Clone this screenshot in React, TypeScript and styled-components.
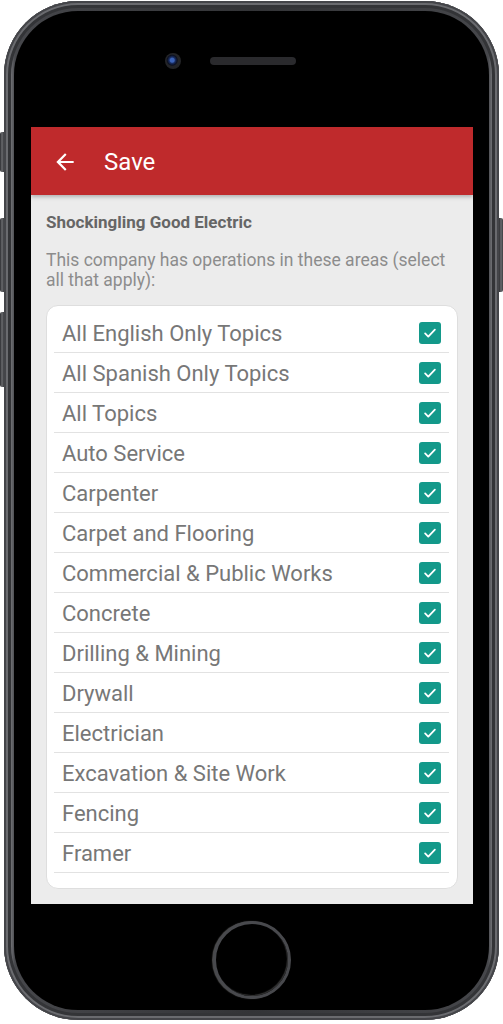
import React, { useState } from 'react';
import styled, { createGlobalStyle } from 'styled-components';

const GlobalStyle = createGlobalStyle`
  html, body {
    margin: 0;
    padding: 0;
    background: #ffffff;
  }
  body {
    font-family: Roboto, 'Noto Sans', Arial, sans-serif;
  }
`;

const TOPICS = [
  'All English Only Topics',
  'All Spanish Only Topics',
  'All Topics',
  'Auto Service',
  'Carpenter',
  'Carpet and Flooring',
  'Commercial & Public Works',
  'Concrete',
  'Drilling & Mining',
  'Drywall',
  'Electrician',
  'Excavation & Site Work',
  'Fencing',
  'Framer',
];

const App: React.FC = () => {
  const [checked, setChecked] = useState<Record<string, boolean>>(
    Object.fromEntries(TOPICS.map((t) => [t, true]))
  );

  const toggle = (topic: string) => {
    setChecked((prev) => ({ ...prev, [topic]: !prev[topic] }));
  };

  return (
    <>
      <GlobalStyle />
      <Stage>
        <Phone>
          <SideButton $side="left" $top={131} $height={40} />
          <SideButton $side="left" $top={217} $height={74} />
          <SideButton $side="left" $top={311} $height={75} />
          <SideButton $side="right" $top={217} $height={74} />
          <Face>
            <TopBar>
              <Camera />
              <Speaker />
            </TopBar>
            <Screen>
              <AppBar>
                <BackIcon viewBox="0 0 24 24">
                  <path d="M20 11H7.83l5.59-5.59L12 4l-8 8 8 8 1.41-1.41L7.83 13H20v-2z" />
                </BackIcon>
                <AppTitle>Save</AppTitle>
              </AppBar>
              <Content>
                <CompanyName>Shockingling Good Electric</CompanyName>
                <Description>
                  This company has operations in these areas (select all that apply):
                </Description>
                <Card>
                  {TOPICS.map((topic) => (
                    <Row key={topic} onClick={() => toggle(topic)}>
                      <RowLabel>{topic}</RowLabel>
                      <CheckBox $on={checked[topic]}>
                        {checked[topic] && (
                          <svg viewBox="0 0 24 24" width="18" height="18">
                            <path
                              d="M5.5 12.5l4.2 4.2L18.5 7.5"
                              fill="none"
                              stroke="#fff"
                              strokeWidth="2.4"
                              strokeLinecap="round"
                              strokeLinejoin="round"
                            />
                          </svg>
                        )}
                      </CheckBox>
                    </Row>
                  ))}
                </Card>
              </Content>
            </Screen>
            <BottomBar>
              <HomeButton />
            </BottomBar>
          </Face>
        </Phone>
      </Stage>
    </>
  );
};

export default App;

const Stage = styled.div`
  width: 503px;
  height: 1024px;
  padding: 1px 4px 0 4px;
  box-sizing: border-box;
`;

const Phone = styled.div`
  position: relative;
  width: 495px;
  height: 1019px;
  box-sizing: border-box;
  border-radius: 74px;
  padding: 10px;
  background: linear-gradient(90deg, #38393c 0%, #707175 1.4%, #46474b 2.2%, #333437 50%, #46474b 97.8%, #707175 98.6%, #38393c 100%);
  box-shadow: inset 0 0 0 2px #444549, inset 0 0 0 4px #6a6b6f, inset 0 0 0 7px #333437;
`;

const SideButton = styled.div<{ $side: 'left' | 'right'; $top: number; $height: number }>`
  position: absolute;
  top: ${(p) => p.$top}px;
  ${(p) => (p.$side === 'left' ? 'left: -4px;' : 'right: -4px;')}
  width: 4px;
  height: ${(p) => p.$height}px;
  background: linear-gradient(90deg, #2b2c2f, #6a6b6f, #3a3b3e);
  border-radius: ${(p) => (p.$side === 'left' ? '2px 0 0 2px' : '0 2px 2px 0')};
`;

const Face = styled.div`
  height: 100%;
  border-radius: 64px;
  background: #000;
  display: flex;
  flex-direction: column;
  align-items: center;
  overflow: hidden;
`;

const TopBar = styled.div`
  height: 116px;
  width: 100%;
  box-sizing: border-box;
  display: flex;
  align-items: center;
  justify-content: center;
  gap: 29px;
  padding: 0 42px 16px 0;
`;

const Camera = styled.div`
  width: 16px;
  height: 16px;
  border-radius: 50%;
  background: radial-gradient(circle at 45% 45%, #3b63b8 0 2px, #1a2f66 3px, #0c1020 5px, #232427 6px);
`;

const Speaker = styled.div`
  width: 86px;
  height: 8px;
  border-radius: 4px;
  background: #2a2a2d;
`;

const Screen = styled.div`
  width: 442px;
  height: 777px;
  margin-left: 1px;
  background: #ececec;
  display: flex;
  flex-direction: column;
`;

const AppBar = styled.div`
  height: 68px;
  flex-shrink: 0;
  background: #bf2a2c;
  display: flex;
  align-items: center;
  padding: 2px 0 0 21px;
  box-sizing: border-box;
  gap: 26px;
  box-shadow: 0 2px 4px rgba(0, 0, 0, 0.25);
  position: relative;
  z-index: 1;
`;

const BackIcon = styled.svg`
  width: 26px;
  height: 26px;
  fill: #fff;
`;

const AppTitle = styled.div`
  color: #fff;
  font-size: 24px;
  font-family: Roboto, sans-serif;
`;

const Content = styled.div`
  padding: 17px 15px 0 15px;
`;

const CompanyName = styled.div`
  font-size: 17px;
  font-weight: 700;
  color: #666;
  line-height: 20px;
`;

const Description = styled.div`
  margin-top: 18px;
  font-size: 17.5px;
  color: #8c8c8c;
  line-height: 20px;
`;

const Card = styled.div`
  margin-top: 15px;
  background: #fff;
  border: 1px solid #dedede;
  border-radius: 12px;
  padding: 7px 8px 15px 7px;
`;

const Row = styled.div`
  height: 40px;
  box-sizing: border-box;
  border-bottom: 1px solid #e2e2e2;
  display: flex;
  align-items: center;
  justify-content: space-between;
  padding: 1px 8px 0 8px;
  cursor: pointer;
`;

const RowLabel = styled.span`
  font-size: 22px;
  color: #777;
`;

const CheckBox = styled.div<{ $on: boolean }>`
  width: 22px;
  height: 22px;
  border-radius: 3px;
  background: ${(p) => (p.$on ? '#13998a' : '#fff')};
  border: ${(p) => (p.$on ? 'none' : '2px solid #999')};
  display: flex;
  align-items: center;
  justify-content: center;
`;

const BottomBar = styled.div`
  flex: 1;
  width: 100%;
  display: flex;
  align-items: center;
  justify-content: center;
  padding-top: 6px;
  box-sizing: border-box;
`;

const HomeButton = styled.div`
  width: 72px;
  height: 72px;
  border-radius: 50%;
  border: 3px solid #48494d;
  box-shadow: inset -1px -1px 1px rgba(255, 255, 255, 0.2), -1px 0 1px rgba(255, 255, 255, 0.3);
  background: #000;
`;
